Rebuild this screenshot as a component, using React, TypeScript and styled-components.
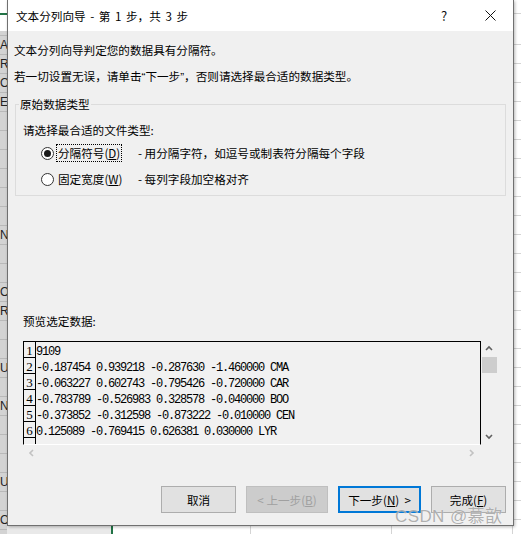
import React from 'react';
import styled, { createGlobalStyle } from 'styled-components';

const UI_FONT = `"Noto Sans CJK SC", "Microsoft YaHei", sans-serif`;
const MONO = `"Liberation Mono", "DejaVu Sans Mono", monospace`;

const GlobalStyle = createGlobalStyle`
  html, body { margin: 0; padding: 0; background: #fff; }
  * { box-sizing: border-box; }
`;

/* ---------- background spreadsheet ---------- */
const Page = styled.div`
  position: relative;
  width: 521px;
  height: 534px;
  overflow: hidden;
  display: flex;
  background: #fff;
`;

const LeftCol = styled.div`
  width: 7px;
  flex-shrink: 0;
  display: flex;
  flex-direction: column;
  overflow: hidden;
`;

const SheetTop = styled.div`
  height: 31px;
  flex-shrink: 0;
  padding-top: 13px;
  background: #fff;
`;

const GreenRule = styled.div`
  height: 2px;
  background: #217346;
`;

const LeftCell = styled.div<{ $h?: number }>`
  height: ${(p) => p.$h ?? 19}px;
  flex-shrink: 0;
  background: #d3d3d3;
  border-bottom: 1px solid #b9b9b9;
  font: 12px "Liberation Sans", sans-serif;
  line-height: 19px;
  color: #222;
  white-space: nowrap;
  overflow: hidden;
`;

const MidCol = styled.div`
  flex: 1;
  display: flex;
  flex-direction: column;
`;

const Spacer = styled.div`
  flex: 1;
`;

const BottomBand = styled.div`
  height: 8px;
  display: flex;
`;

const BandCell = styled.div<{ $w?: number; $bg?: string; $line?: string }>`
  ${(p) => (p.$w ? `width: ${p.$w}px;` : 'flex: 1;')}
  flex-shrink: 0;
  background: ${(p) => p.$bg ?? '#fff'};
  border-right: 1px solid ${(p) => p.$line ?? '#d4d4d4'};
`;

const GreenBar = styled.div`
  width: 2px;
  background: #217346;
`;

const RightCol = styled.div`
  width: 8px;
  flex-shrink: 0;
  display: flex;
  flex-direction: column;
`;

const RightCell = styled.div<{ $h: number }>`
  height: ${(p) => p.$h}px;
  flex-shrink: 0;
  border-bottom: 1px solid #d4d4d4;
`;

/* ---------- dialog ---------- */
const Dialog = styled.div`
  position: absolute;
  left: 7px;
  top: 0;
  width: 507px;
  height: 526px;
  background: #f0f0f0;
  border: 1px solid #707070;
  border-top: none;
  box-shadow: 1px 1px 3px rgba(0, 0, 0, 0.28);
  display: flex;
  flex-direction: column;
  font-family: ${UI_FONT};
  font-size: 11.6px;
  color: #000;
`;

const TitleBar = styled.div`
  height: 31px;
  flex-shrink: 0;
  background: #fff;
  display: flex;
  align-items: center;
`;

const TitleText = styled.div`
  flex: 1;
  padding-left: 8px;
  line-height: 16px;
  word-spacing: 2px;
`;

const TitleButton = styled.div`
  width: 46px;
  height: 31px;
  display: flex;
  align-items: center;
  justify-content: center;
  font-size: 13px;
  color: #111;
`;

const Body = styled.div`
  flex: 1;
  display: flex;
  flex-direction: column;
  padding-bottom: 11px;
`;

const Line = styled.div<{ $mt: number; $ml?: number }>`
  margin-top: ${(p) => p.$mt}px;
  margin-left: ${(p) => p.$ml ?? 6}px;
  line-height: 16px;
  height: 16px;
  white-space: nowrap;
`;

const Quote = styled.span`
  font-family: "Liberation Sans", sans-serif;
`;

const Group = styled.fieldset`
  margin: 12px 7px 0 7px;
  padding: 0 0 7px 3px;
  border: 1px solid #dcdcdc;
  min-width: 0;
  display: flex;
  flex-direction: column;
`;

const Legend = styled.legend`
  padding: 0 1px;
  line-height: 16px;
  font-size: 11.6px;
`;

const RadioRow = styled.div<{ $mt: number }>`
  margin-top: ${(p) => p.$mt}px;
  margin-left: 22px;
  height: 18px;
  display: flex;
  align-items: center;
  white-space: nowrap;
`;

const RadioCircle = styled.span<{ $on?: boolean }>`
  width: 13px;
  height: 13px;
  border-radius: 50%;
  border: 1px solid #333;
  background: #fff;
  display: flex;
  align-items: center;
  justify-content: center;
  flex-shrink: 0;
  &::after {
    content: '';
    width: 7px;
    height: 7px;
    border-radius: 50%;
    background: ${(p) => (p.$on ? '#1a1a1a' : 'transparent')};
  }
`;

const RadioLabelCell = styled.span`
  width: 82px;
  margin-left: 2px;
  display: flex;
  align-items: center;
`;

const RadioLabel = styled.span<{ $focus?: boolean }>`
  padding: 0 1px;
  line-height: 16px;
  border: 1px dotted ${(p) => (p.$focus ? '#000' : 'transparent')};
`;

const Desc = styled.span`
  line-height: 16px;
`;

const PreviewBox = styled.div`
  margin: 12px 0 0 15px;
  display: grid;
  grid-template-columns: 458px 16px;
  grid-template-rows: 104px 15px;
`;

const DataArea = styled.div`
  border-left: 1px solid #000;
  border-top: 1px solid #000;
  border-right: 1px solid #000;
  border-bottom: 1px solid #fff;
  background: #f1f1f1;
  overflow: hidden;
  display: flex;
  flex-direction: column;
`;

const DataRow = styled.div`
  height: 16px;
  flex-shrink: 0;
  display: flex;
`;

const RowNum = styled.div`
  width: 12px;
  flex-shrink: 0;
  border-right: 1px solid #000;
  border-bottom: 1px solid #000;
  font-family: "Liberation Serif", serif;
  font-size: 13px;
  line-height: 13px;
  display: flex;
  align-items: flex-end;
  justify-content: center;
`;

const RowText = styled.div`
  padding-top: 2px;
  font-family: ${MONO};
  font-size: 12px;
  letter-spacing: -1.2px;
  line-height: 16px;
  white-space: pre;
  color: #000;
`;

const VScroll = styled.div`
  display: flex;
  flex-direction: column;
  align-items: center;
  background: #f0f0f0;
`;

const ArrowSlot = styled.div<{ $h: number }>`
  height: ${(p) => p.$h}px;
  width: 100%;
  display: flex;
  align-items: center;
  justify-content: center;
  flex-shrink: 0;
`;

const Thumb = styled.div`
  width: 15px;
  height: 16px;
  margin-left: 1px;
  background: #cdcdcd;
  flex-shrink: 0;
`;

const HScroll = styled.div`
  display: flex;
  align-items: center;
  justify-content: space-between;
  padding: 0 5px 0 5px;
`;

const ButtonRow = styled.div`
  margin-top: 26px;
  height: 27px;
  display: flex;
  justify-content: flex-end;
  gap: 10px;
  padding-right: 7px;
`;

const Btn = styled.div<{ $w: number; $variant?: 'default' | 'disabled' | 'primary' }>`
  width: ${(p) => p.$w}px;
  height: 27px;
  display: flex;
  align-items: center;
  justify-content: center;
  white-space: nowrap;
  line-height: 16px;
  background: ${(p) => (p.$variant === 'disabled' ? '#cccccc' : '#e1e1e1')};
  color: ${(p) => (p.$variant === 'disabled' ? '#a0a0a0' : '#000')};
  border: ${(p) =>
    p.$variant === 'primary'
      ? '2px solid #0078d7'
      : p.$variant === 'disabled'
      ? '1px solid #bfbfbf'
      : '1px solid #adadad'};
`;

const Watermark = styled.div`
  position: absolute;
  left: 395px;
  top: 502px;
  font-family: "Liberation Sans", "Noto Sans CJK SC", sans-serif;
  font-size: 17px;
  letter-spacing: 0.4px;
  color: rgba(150, 150, 150, 0.75);
  text-shadow: 0 0 1px rgba(255, 255, 255, 0.8);
  white-space: nowrap;
  pointer-events: none;
`;

const Chevron = ({ dir, color }: { dir: 'up' | 'down' | 'left' | 'right'; color: string }) => {
  const pts: Record<string, string> = {
    up: '1,5 4,2 7,5',
    down: '1,2 4,5 7,2',
    left: '5,1 2,4 5,7',
    right: '2,1 5,4 2,7',
  };
  return (
    <svg width="8" height="8" viewBox="0 0 8 8">
      <polyline points={pts[dir]} fill="none" stroke={color} strokeWidth="1.6" />
    </svg>
  );
};

const leftLetters = [
  'A', 'R', 'O', 'EN', '', '', '', '', '', '', 'N', '', '', 'O', 'R', '', '', 'U', '', 'N', '', '', '', 'U', '', 'O', '',
];

const rightHeights = [14, 31, ...Array.from({ length: 26 }, () => 19)];

const dataRows = [
  { n: '1', t: '9109' },
  { n: '2', t: '-0.187454 0.939218 -0.287630 -1.460000 CMA' },
  { n: '3', t: '-0.063227 0.602743 -0.795426 -0.720000 CAR' },
  { n: '4', t: '-0.783789 -0.526983 0.328578 -0.040000 BOO' },
  { n: '5', t: '-0.373852 -0.312598 -0.873222 -0.010000 CEN' },
  { n: '6', t: '0.125089 -0.769415 0.626381 0.030000 LYR' },
  { n: '', t: '' },
];

export default function App() {
  return (
    <>
      <GlobalStyle />
      <Page>
        <LeftCol>
          <SheetTop>
            <GreenRule />
          </SheetTop>
          <LeftCell $h={5} />
          {leftLetters.map((l, i) => (
            <LeftCell key={i}>{l}</LeftCell>
          ))}
        </LeftCol>
        <MidCol>
          <Spacer />
          <BottomBand>
            <BandCell $w={104} $bg="#e9e9e9" $line="#e9e9e9" />
            <GreenBar />
            <BandCell $w={138} />
            <BandCell $w={141} />
            <BandCell />
          </BottomBand>
        </MidCol>
        <RightCol>
          {rightHeights.map((h, i) => (
            <RightCell key={i} $h={h} />
          ))}
        </RightCol>

        <Dialog>
          <TitleBar>
            <TitleText>文本分列向导 - 第 1 步，共 3 步</TitleText>
            <TitleButton>?</TitleButton>
            <TitleButton>
              <svg width="11" height="11" viewBox="0 0 11 11">
                <path d="M0.5 0.5 L10.5 10.5 M10.5 0.5 L0.5 10.5" stroke="#111" strokeWidth="1" fill="none" />
              </svg>
            </TitleButton>
          </TitleBar>
          <Body>
            <Line $mt={11}>文本分列向导判定您的数据具有分隔符。</Line>
            <Line $mt={10}>
              若一切设置无误，请单击<Quote>“</Quote>下一步<Quote>”</Quote>，否则请选择最合适的数据类型。
            </Line>
            <Group>
              <Legend>原始数据类型</Legend>
              <Line $mt={10} $ml={4}>请选择最合适的文件类型:</Line>
              <RadioRow $mt={6}>
                <RadioCircle $on />
                <RadioLabelCell>
                  <RadioLabel $focus>
                    分隔符号(<u>D</u>)
                  </RadioLabel>
                </RadioLabelCell>
                <Desc>- 用分隔字符，如逗号或制表符分隔每个字段</Desc>
              </RadioRow>
              <RadioRow $mt={8}>
                <RadioCircle />
                <RadioLabelCell>
                  <RadioLabel>
                    固定宽度(<u>W</u>)
                  </RadioLabel>
                </RadioLabelCell>
                <Desc>- 每列字段加空格对齐</Desc>
              </RadioRow>
            </Group>
            <Line $mt={117} $ml={15}>预览选定数据:</Line>
            <PreviewBox>
              <DataArea>
                {dataRows.map((r, i) => (
                  <DataRow key={i}>
                    <RowNum>{r.n}</RowNum>
                    <RowText>{r.t}</RowText>
                  </DataRow>
                ))}
              </DataArea>
              <VScroll>
                <ArrowSlot $h={16}>
                  <Chevron dir="up" color="#606060" />
                </ArrowSlot>
                <Thumb />
                <Spacer />
                <ArrowSlot $h={16}>
                  <Chevron dir="down" color="#606060" />
                </ArrowSlot>
              </VScroll>
              <HScroll>
                <Chevron dir="left" color="#c2c2c2" />
                <Chevron dir="right" color="#c2c2c2" />
              </HScroll>
              <div />
            </PreviewBox>
            <ButtonRow>
              <Btn $w={75}>取消</Btn>
              <Btn $w={82} $variant="disabled">
                &lt; 上一步(<u>B</u>)
              </Btn>
              <Btn $w={83} $variant="primary">
                下一步(<u>N</u>)&nbsp;&nbsp;&gt;
              </Btn>
              <Btn $w={75}>
                完成(<u>F</u>)
              </Btn>
            </ButtonRow>
          </Body>
        </Dialog>
        <Watermark>CSDN @慕歆</Watermark>
      </Page>
    </>
  );
}
